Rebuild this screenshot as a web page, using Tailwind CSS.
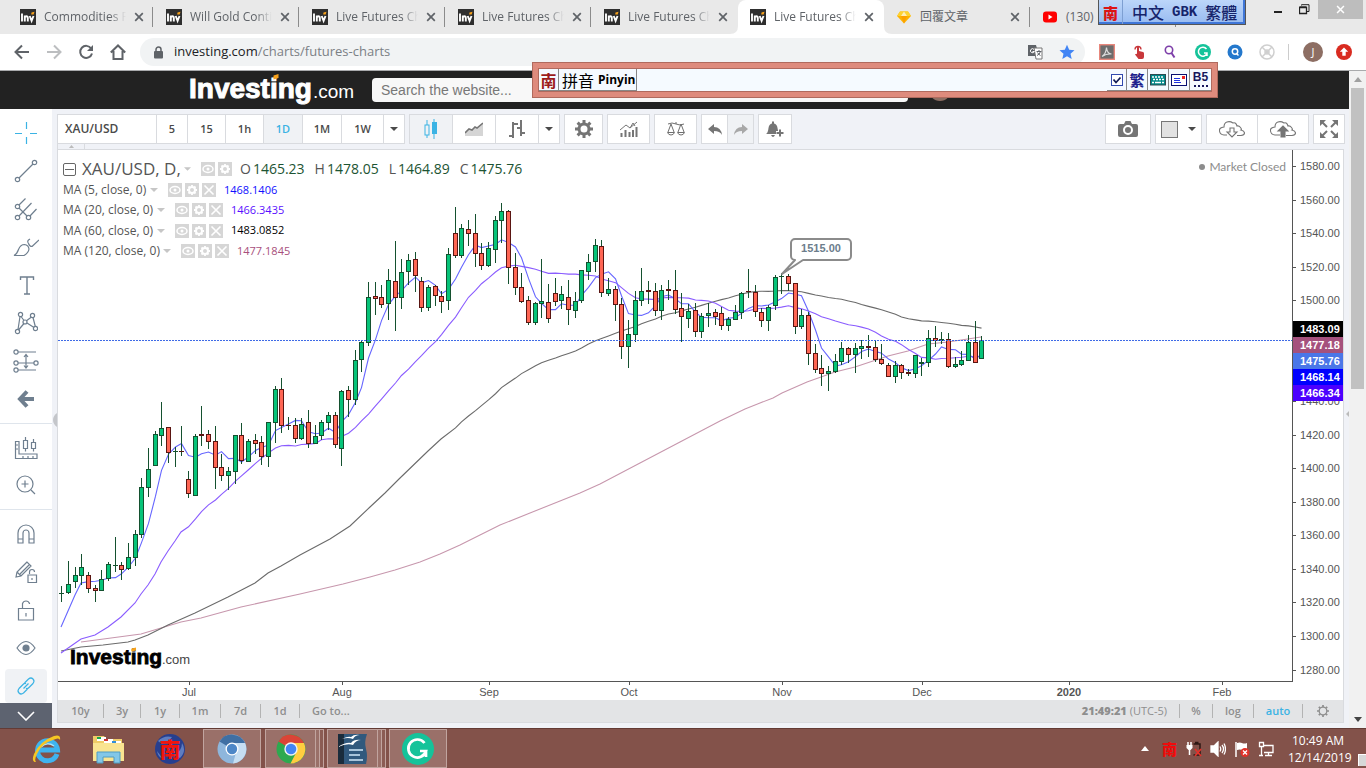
<!DOCTYPE html>
<html lang="en">
<head>
<meta charset="utf-8">
<title>Live Futures Charts - Investing.com</title>
<script src="https://cdn.jsdelivr.net/npm/@tailwindcss/browser@4"></script>
</head>
<body class="h-screen w-full overflow-hidden bg-white font-['Open_Sans','Noto_Sans_CJK_TC',sans-serif]">
<svg class="hidden" aria-hidden="true">
  <symbol id="fav" viewBox="0 0 16 16"><rect width="16" height="16" fill="#2f2f2f"/><g stroke="#fff" fill="none" stroke-width="1.9"><path d="M2 4.5V12.500M4.800 12.500V6.500M4.800 9q0-1.700 1.500-1.700t1.500 1.700v3.500M9.700 7l1.900 4.800L13.500 7"/></g><path d="M11.500 3.500l3-.8-.8 2.800h-2.500z" fill="#f7a11b"/></symbol>
  <symbol id="x" viewBox="0 0 10 10"><path d="M1.200 1.200l7.600 7.600M8.800 1.200L1.200 8.800" stroke="currentColor" stroke-width="1.700" fill="none"/></symbol>
  <symbol id="eye" viewBox="0 0 14 14"><rect width="14" height="14" fill="#d6d6d6"/><ellipse cx="7" cy="7" rx="5" ry="3.500" fill="none" stroke="#fff" stroke-width="1.500"/><circle cx="7" cy="7" r="1.500" fill="#fff"/></symbol>
  <symbol id="cog" viewBox="0 0 14 14"><rect width="14" height="14" fill="#d6d6d6"/><circle cx="7" cy="7" r="3" fill="none" stroke="#fff" stroke-width="2"/><path d="M7 2v1.500M7 10.500V12M2 7h1.500M10.500 7H12M3.500 3.500l1 1M9.500 9.500l1 1M10.500 3.500l-1 1M3.500 10.500l1-1" stroke="#fff" stroke-width="1.800"/></symbol>
  <symbol id="del" viewBox="0 0 14 14"><rect width="14" height="14" fill="#d6d6d6"/><path d="M2.500 2.500l9 9M11.500 2.500l-9 9" stroke="#fff" stroke-width="1.600"/></symbol>
  <symbol id="caret" viewBox="0 0 8 4"><path d="M0 0h8L4 4z" fill="currentColor"/></symbol>
</svg>

<div class="relative flex h-full w-full flex-col">

<!-- Tab strip -->
<div class="flex h-[34px] shrink-0 bg-[#e9e9e9] pl-2 text-xs text-[#5f6368]">
  <div class="flex w-[146px] shrink-0 items-center border-r border-transparent pl-3"><svg class="size-4"><use href="#fav"/></svg><span class="ml-2 w-[82px] overflow-hidden whitespace-nowrap [mask-image:linear-gradient(90deg,#000_80%,transparent)]">Commodities Futures</span><button aria-label="Close tab" class="ml-2"><svg class="size-[10px]"><use href="#x"/></svg></button><i class="ml-auto h-5 w-px bg-[#8b8b8b]"></i></div>
  <div class="flex w-[146px] shrink-0 items-center border-r border-transparent pl-3"><svg class="size-4"><use href="#fav"/></svg><span class="ml-2 w-[82px] overflow-hidden whitespace-nowrap [mask-image:linear-gradient(90deg,#000_80%,transparent)]">Will Gold Continue</span><button aria-label="Close tab" class="ml-2"><svg class="size-[10px]"><use href="#x"/></svg></button><i class="ml-auto h-5 w-px bg-[#8b8b8b]"></i></div>
  <div class="flex w-[146px] shrink-0 items-center border-r border-transparent pl-3"><svg class="size-4"><use href="#fav"/></svg><span class="ml-2 w-[82px] overflow-hidden whitespace-nowrap [mask-image:linear-gradient(90deg,#000_80%,transparent)]">Live Futures Charts</span><button aria-label="Close tab" class="ml-2"><svg class="size-[10px]"><use href="#x"/></svg></button><i class="ml-auto h-5 w-px bg-[#8b8b8b]"></i></div>
  <div class="flex w-[146px] shrink-0 items-center border-r border-transparent pl-3"><svg class="size-4"><use href="#fav"/></svg><span class="ml-2 w-[82px] overflow-hidden whitespace-nowrap [mask-image:linear-gradient(90deg,#000_80%,transparent)]">Live Futures Charts</span><button aria-label="Close tab" class="ml-2"><svg class="size-[10px]"><use href="#x"/></svg></button><i class="ml-auto h-5 w-px bg-[#8b8b8b]"></i></div>
  <div class="flex w-[146px] shrink-0 items-center border-r border-transparent pl-3"><svg class="size-4"><use href="#fav"/></svg><span class="ml-2 w-[82px] overflow-hidden whitespace-nowrap [mask-image:linear-gradient(90deg,#000_80%,transparent)]">Live Futures Charts</span><button aria-label="Close tab" class="ml-2"><svg class="size-[10px]"><use href="#x"/></svg></button></div>
  <div class="relative flex w-[146px] shrink-0 items-center rounded-t-lg bg-white pl-3"><svg class="absolute bottom-0 -left-2 size-2" viewBox="0 0 8 8"><path d="M8 0v8H0q8 0 8-8z" fill="#fff"/></svg><svg class="absolute -right-2 bottom-0 size-2" viewBox="0 0 8 8"><path d="M0 0v8h8Q0 8 0 0z" fill="#fff"/></svg><svg class="size-4"><use href="#fav"/></svg><span class="ml-2 w-[82px] overflow-hidden whitespace-nowrap [mask-image:linear-gradient(90deg,#000_80%,transparent)]">Live Futures Charts</span><button aria-label="Close tab" class="ml-2"><svg class="size-[10px]"><use href="#x"/></svg></button></div>
  <div class="flex w-[146px] shrink-0 items-center pl-3"><svg class="size-4" viewBox="0 0 16 16"><path d="M4 2.500h8L15 7l-7 7.500L1 7z" fill="#fdb300"/><path d="M4 2.500h8L15 7H1z" fill="#fdd231"/><path d="M5 7l3-4.500L11 7z" fill="#feeeb7"/><path d="M5 7h6l-3 7.500z" fill="#fda000"/></svg><span class="ml-2 w-[82px]">回覆文章</span><button aria-label="Close tab" class="ml-2"><svg class="size-[10px]"><use href="#x"/></svg></button><i class="ml-auto h-5 w-px bg-[#8b8b8b]"></i></div>
  <div class="flex w-[146px] shrink-0 items-center pl-3"><svg class="size-4" viewBox="0 0 16 16"><rect x="1" y="2.500" width="14" height="11" rx="3" fill="#f00"/><path d="M6.500 5.500v5L10.500 8z" fill="#fff"/></svg><span class="ml-2">(130)</span><i class="ml-auto h-5 w-px bg-[#8b8b8b]"></i></div>
  <div class="ml-auto flex items-start text-[#222]">
    <button aria-label="Minimise" class="mr-4"><svg class="mt-[4px] h-4 w-[10px]" viewBox="0 0 10 16"><path d="M1 8h8" stroke="#222" stroke-width="2"/></svg></button>
    <button aria-label="Restore" class="mr-2"><svg class="mt-1 h-3 w-[11px]" viewBox="0 0 11 12" fill="none" stroke="#222"><path d="M.5 3.500h7v6h-7zM.5 3h7" stroke-width="1.300"/><path d="M2.500 1.500V.7h7.500v6.800H8"/></svg></button>
    <button aria-label="Close" class="mr-[3px] flex h-[19px] w-[45px] items-center justify-center bg-[#bdbdbd] text-white"><svg class="size-[9px]"><use href="#x" width="9" height="9"/></svg></button>
  </div>
</div>

<!-- Address bar -->
<div class="flex h-[37px] shrink-0 items-center border-b border-[#a9aaac] bg-white pr-[14px] pl-[14px]">
  <button aria-label="Back" class="mr-4"><svg class="size-4" viewBox="0 0 16 16" fill="none" stroke="#5f6368" stroke-width="2"><path d="M15 8H2M8 1.500L1.500 8 8 14.500"/></svg></button>
  <button aria-label="Forward" class="mr-4"><svg class="size-4" viewBox="0 0 16 16" fill="none" stroke="#bcbec0" stroke-width="2"><path d="M1 8h13M8 1.500L14.500 8 8 14.500"/></svg></button>
  <button aria-label="Reload" class="mr-4"><svg class="size-4" viewBox="0 0 16 16" fill="none" stroke="#5f6368" stroke-width="2"><path d="M13.200 4.500A6 6 0 1 0 14 9.500"/><path d="M15 1v6H9z" fill="#5f6368" stroke="none"/></svg></button>
  <button aria-label="Home" class="mr-[14px]"><svg class="size-4" viewBox="0 0 16 16" fill="none" stroke="#5f6368" stroke-width="2"><path d="M.8 8.500L8 1.500l7.200 7M3.500 7v8h9V7"/></svg></button>
  <div class="flex h-7 min-w-0 flex-1 items-center rounded-full bg-[#f1f3f4] pr-[10px] pl-[14px]">
    <svg class="h-[13px] w-[9px]" viewBox="0 0 9 13"><rect y="5" width="9" height="7.500" rx="1" fill="#5f6368"/><path d="M2 5V3.500a2.500 2.500 0 0 1 5 0V5" fill="none" stroke="#5f6368" stroke-width="1.500"/></svg>
    <div class="ml-[11px] text-[13px] text-[#7b8085]"><span class="text-[#202124]">investing.com</span>/charts/futures-charts</div>
    <svg class="mr-4 ml-auto size-4" viewBox="0 0 16 16"><path d="M1 1h8l3 11H1z" fill="#5f6368"/><path d="M7 4h8v11H9z" fill="#fff" stroke="#777"/><path d="M7 5.500a2 2 0 1 0 .3 2H5.500" stroke="#fff" fill="none"/><path d="M9.500 7.500h5M12 6v1.500M13.500 7.500q-1 3-3.500 4M10.500 8.500q1 2 3 3" stroke="#5f6368" fill="none"/></svg>
    <svg class="size-4" viewBox="0 0 16 16"><path d="M8 .8l2.200 5 5.300.5-4 3.500 1.200 5.300L8 12.300l-4.700 2.800 1.200-5.300-4-3.500 5.300-.5z" fill="#4285f4"/></svg>
  </div>
  <svg class="ml-[14px] size-4" viewBox="0 0 16 16"><rect x=".7" y=".7" width="14.600" height="14.600" fill="#6d6d6d" stroke="#e8877c" stroke-width="1.400"/><path d="M3 12.500q4-2.500 4.500-9 .5 6 5 6.500-5-.5-9.500 2.500" fill="none" stroke="#ddd" stroke-width="1.200"/></svg>
  <svg class="ml-[16px] size-4" viewBox="0 0 16 16"><path d="M6 9V3.500q0-1 1-1t1 1V7l4 1q1 .3 1 1.500V13q0 2-2 2H7.500L4 10.500q1-1 2-.5z" fill="#c8373b"/><path d="M4 5.500a3 3 0 1 1 6 0" fill="none" stroke="#c8373b" stroke-width="1.300"/></svg>
  <svg class="ml-[15px] size-4" viewBox="0 0 16 16" fill="none" stroke="#7d3fa9"><circle cx="7" cy="6" r="3.700" stroke-width="1.600"/><path d="M9.500 9l3 4.500" stroke-width="2"/></svg>
  <svg class="ml-[17px] size-4" viewBox="0 0 16 16"><circle cx="8" cy="8" r="8" fill="#15c39a"/><path d="M11.500 5A4.500 4.500 0 1 0 12 9.500M9 9h3v3" fill="none" stroke="#fff" stroke-width="1.500"/></svg>
  <svg class="ml-[16px] size-4" viewBox="0 0 16 16"><circle cx="8" cy="8" r="7.500" fill="#2478cc"/><circle cx="8" cy="7.500" r="2.700" fill="none" stroke="#fff" stroke-width="1.500"/><path d="M9.500 9.500l2 2" stroke="#fff" stroke-width="1.500"/></svg>
  <svg class="ml-[16px] size-4" viewBox="0 0 16 16" fill="none" stroke="#cfcfcf" stroke-width="1.500"><circle cx="8" cy="8" r="7"/><circle cx="8" cy="8" r="2"/><path d="M3 3l10 10M13 3L3 13"/></svg>
  <i class="ml-[13px] h-4 w-px bg-[#ccc]"></i>
  <span class="ml-[14px] flex size-5 items-center justify-center rounded-full bg-[#8d6e63] text-[11px] text-white">J</span>
  <svg class="ml-[13px] size-4 shrink-0" viewBox="0 0 16 16"><circle cx="8" cy="8" r="8" fill="#d92b20"/><path d="M8 3.500l4.200 4.200H9.700v4H6.300v-4H3.800z" fill="#fff"/></svg>
</div>

<!-- Page -->
<div class="flex min-h-0 flex-1">
  <div class="flex min-w-0 flex-1 flex-col">
    <header class="flex h-[38px] shrink-0 items-center bg-[#222] pl-[190px]">
      <a href="#" aria-label="Investing.com"><svg class="h-[34px] w-[168px] overflow-visible font-['Liberation_Sans',sans-serif]" viewBox="0 0 168 34"><text x="-1" y="25" font-size="28" font-weight="bold" fill="#fff" stroke="#fff" stroke-width="1">Investing</text><text x="123" y="25" font-size="19" fill="#fff">.com</text><path d="M83.500 2.500l5-1.500v4l-5 1.500z" fill="#f7a11b"/></svg></a>
      <input aria-label="Search" placeholder="Search the website..." class="ml-[14px] h-6 w-[536px] rounded-sm bg-[#f8f8f8] px-[9px] font-['Liberation_Sans',sans-serif] text-sm placeholder:text-[#777]">
      <span class="ml-[21px] size-[22px] rounded-full bg-[#8d6e63]"></span>
    </header>

    <div class="flex min-h-0 flex-1">
      <!-- Drawing tools -->
      <nav aria-label="Drawing tools" class="flex w-[52px] shrink-0 flex-col bg-white pt-[5px] text-[#6f7f8f]">
        <button aria-label="Crosshair" class="flex h-[38px] items-center justify-center"><svg class="size-6" viewBox="0 0 24 24" stroke="#3bb3e4" stroke-width="1.200"><path d="M12.500 1v7M12.500 16v7M1 12.500h7M16 12.500h7"/></svg></button>
        <button aria-label="Trend line" class="flex h-[38px] items-center justify-center"><svg class="size-6" viewBox="0 0 24 24" fill="none" stroke="currentColor" stroke-width="1.200"><circle cx="3.500" cy="20.500" r="2.200"/><circle cx="20.500" cy="3.500" r="2.200"/><path d="M5 19L19 5"/></svg></button>
        <button aria-label="Pitchfork" class="flex h-[38px] items-center justify-center"><svg class="size-6" viewBox="0 0 24 24" fill="none" stroke="currentColor" stroke-width="1.200"><circle cx="3.500" cy="9.500" r="2.200"/><circle cx="3.500" cy="20.500" r="2.200"/><circle cx="14.500" cy="20.500" r="2.200"/><path d="M5 8l6.500-6.500M5 11l8 8M5 19L17.500 6M16 19l6.500-7"/></svg></button>
        <button aria-label="Brush" class="flex h-[38px] items-center justify-center"><svg class="h-6 w-[26px]" viewBox="0 0 26 24" fill="none" stroke="currentColor" stroke-width="1.200"><path d="M1 20.500q3-1.500 4.500-6Q7.500 9.500 11.500 9.500q4 .5 4.500 4.500-.5 4-5 6.500zM15.500 5q-1.500 1.500 0 3.500M19 11.500q-2.500 0-3.500-3M19 11.500L26 5M15.500 5l1.500-1"/></svg></button>
        <button aria-label="Text" class="flex h-[38px] items-center justify-center"><svg class="size-6" viewBox="0 0 24 24" fill="none" stroke="currentColor" stroke-width="1.400"><path d="M6.500 7V4h13v3M13 4v17M10 21h6"/></svg></button>
        <button aria-label="Patterns" class="flex h-[38px] items-center justify-center"><svg class="size-6" viewBox="0 0 24 24" fill="none" stroke="currentColor" stroke-width="1.200"><circle cx="6.500" cy="3.500" r="2.100"/><circle cx="18.500" cy="4.500" r="2.100"/><circle cx="3.500" cy="20.500" r="2.100"/><circle cx="21.500" cy="17.500" r="2.100"/><circle cx="11" cy="11" r="2"/><path d="M6 5.500l-2 13M7 5.500l3 4M17.500 6l-5 3.700M19 6.500l2.300 9M13 12l7 4.500M10 12.500l-5.500 6.500"/></svg></button>
        <button aria-label="Prediction" class="flex h-[38px] items-center justify-center"><svg class="h-6 w-[26px]" viewBox="0 0 26 24" fill="none" stroke="currentColor" stroke-width="1.200"><circle cx="3" cy="3" r="2.100"/><circle cx="3" cy="14" r="2.100"/><circle cx="3" cy="21" r="2.100"/><circle cx="23" cy="14" r="2.100"/><path d="M5 3h18M5 14h16M5 21h18M13 6v12M11 8l2-2.500L15 8M11 16.500l2 2.500 2-2.500"/></svg></button>
        <button aria-label="Back arrow" class="flex h-[38px] items-center justify-center"><svg class="size-5" viewBox="0 0 20 20" fill="none" stroke="currentColor" stroke-width="4"><path d="M18 10H5M11 2.500L4 10l7 7.500"/></svg></button>
        <hr class="mt-[5px] mb-[6px] border-[#dfe5ec]">
        <button aria-label="Measure" class="flex h-[36px] items-center justify-center"><svg class="size-6" viewBox="0 0 24 24" fill="none" stroke="currentColor" stroke-width="1.200"><path d="M1.500 5.500h3.500v12.500h18v4.500H1.500zM2 9h2M2 13h2M9 20v2M14 20v2M19 20v2M9.500 4.500h4v8h-4zM11.500 1v3.500M11.500 12.500v3M17.500 6.500h4v6h-4zM19.500 3v3.500M19.500 12.500v3"/></svg></button>
        <button aria-label="Zoom in" class="flex h-[37px] items-center justify-center"><svg class="size-5" viewBox="0 0 20 20" fill="none" stroke="currentColor" stroke-width="1.200"><circle cx="9" cy="9" r="8"/><path d="M15 15l4 4M9 5.500v7M5.500 9h7"/></svg></button>
        <hr class="mt-[6px] mb-[5px] border-[#dfe5ec]">
        <button aria-label="Magnet" class="flex h-[38px] items-center justify-center"><svg class="size-5" viewBox="0 0 20 20" fill="none" stroke="currentColor" stroke-width="1.200"><path d="M2 19V9a8 8 0 0 1 16 0v10h-5V9a3 3 0 0 0-6 0v10zM2 15h5M13 15h5"/></svg></button>
        <button aria-label="Stay in drawing mode" class="flex h-[38px] items-center justify-center"><svg class="size-6" viewBox="0 0 24 24" fill="none" stroke="currentColor" stroke-width="1.200"><path d="M2 17l1-5L13 2l4 4L7 16zM3 12l4 4M5 10l8-8M6 14l9-9M15.500 14v-2a2.500 2.500 0 0 1 5 0M14 15h8.500v7.500H14zM18 18v2"/></svg></button>
        <button aria-label="Lock drawings" class="flex h-[38px] items-center justify-center"><svg class="h-[22px] w-[18px]" viewBox="0 0 18 22" fill="none" stroke="currentColor" stroke-width="1.200"><path d="M1.500 9.500h15v11.500h-15zM5.500 9.500V4.500a3.700 3.700 0 0 1 7 0V5M9 14v3.500" /></svg></button>
        <button aria-label="Hide drawings" class="flex h-[38px] items-center justify-center"><svg class="h-4 w-5" viewBox="0 0 20 16" fill="none" stroke="currentColor" stroke-width="1.200"><path d="M1 8q9-13 18 0-9 13-18 0z"/><circle cx="10" cy="8" r="3" fill="currentColor"/></svg></button>
        <button aria-label="Link" class="mx-[5px] mt-[2px] flex h-[34px] shrink-0 items-center justify-center rounded bg-[#f0f2f5]"><svg class="size-5" viewBox="0 0 20 20" fill="none" stroke="#3bb3e4" stroke-width="1.200"><path d="M8.500 7l4-4q2.500-2 4.500 0t0 4.500l-4 4q-1.500 1.500-3 .8M11.500 13l-4 4q-2.500 2-4.500 0t0-4.500l4-4q1.500-1.500 3-.8M7.500 12.500l5-5"/></svg></button>
        <button aria-label="More tools" class="flex min-h-0 flex-1 items-center justify-center bg-[#5d6370]"><svg class="h-[10px] w-[18px]" viewBox="0 0 18 10" fill="none" stroke="#fff" stroke-width="1.600"><path d="M1 1l8 8 8-8"/></svg></button>
      </nav>

      <div class="relative flex min-w-0 flex-1 flex-col bg-[#f0f2f7] pr-1 pl-[5px]">
        <!-- Chart toolbar -->
        <div class="mt-[5px] flex h-[30px] shrink-0 gap-1 text-[11px] font-semibold text-[#4a4a4a] [&_button]:flex [&_button]:items-center [&_button]:justify-center [&_button]:border-[#d9dbdf]">
          <div class="flex border border-[#d9dbdf] bg-white">
            <button class="w-[99px] justify-start! border-r pl-[7px] text-xs">XAU/USD</button>
            <button class="w-[31px] border-r">5</button><button class="w-[38px] border-r">15</button><button class="w-[38px] border-r">1h</button><button class="w-[39px] border-r bg-[#f0f2f5] text-[#3bb3e4]">1D</button><button class="w-[39px] border-r">1M</button><button class="w-[42px] border-r">1W</button><button aria-label="More intervals" class="w-[20px]"><svg class="h-1 w-2"><use href="#caret"/></svg></button>
          </div>
          <div class="flex border border-[#d9dbdf] bg-white">
            <button aria-label="Candles" class="w-[43px] border-r bg-[#f0f2f5]"><svg class="h-5 w-[14px]" viewBox="0 0 14 20"><path d="M3 1v18M10 0v20" stroke="#3bb3e4"/><rect x="1" y="6" width="4" height="10" fill="#f0f2f5" stroke="#3bb3e4"/><rect x="8" y="3" width="5" height="12" fill="#3bb3e4"/></svg></button>
            <button aria-label="Area" class="w-[43px] border-r"><svg class="h-[14px] w-[18px]" viewBox="0 0 18 14"><path d="M0 11l4-4 3 1 3-3 2 1 6-5v13H0z" fill="#d5d5d5"/><path d="M0 11l4-4 3 1 3-3 2 1 6-5" fill="none" stroke="#757575" stroke-width="1.600"/></svg></button>
            <button aria-label="Bars" class="w-[43px] border-r"><svg class="h-5 w-[18px]" viewBox="0 0 18 20" fill="none" stroke="#757575" stroke-width="2"><path d="M5 3v16M1 17h4M5 5h5M13 1v16M13 14h4M9 9h4"/></svg></button>
            <button aria-label="More styles" class="w-[20px]"><svg class="h-1 w-2"><use href="#caret"/></svg></button>
          </div>
          <button aria-label="Settings" class="w-[39px] border bg-white"><svg class="size-[18px]" viewBox="0 0 18 18" fill="none" stroke="#757575"><circle cx="9" cy="9" r="5" stroke-width="3"/><path d="M9 0v4M9 14v4M0 9h4M14 9h4M2.600 2.600l3 3M12.400 12.400l3 3M15.400 2.600l-3 3M2.600 15.400l3-3" stroke-width="3"/></svg></button>
          <button aria-label="Indicators" class="w-[43px] border bg-white"><svg class="h-4 w-[18px]" viewBox="0 0 18 16" fill="none" stroke="#757575"><path d="M1.500 12v4M5.500 9v7M9.500 11v5M13 9v7M16.500 6v10" stroke-width="2"/><path d="M0 9l6-5 4 3 7-6M10 7l3-5 2 3"/></svg></button>
          <button aria-label="Compare" class="w-[43px] border bg-white"><svg class="size-[18px]" viewBox="0 0 18 18" fill="none" stroke="#6f6f6f"><path d="M1 4q4-2 8 0t8 0M9 2v2M4 4L1 12M4 4l3 8M14 4l-3 8M14 4l3 8M.5 12.500h7q-1 2.500-3.500 2.500T.5 12.500zM10.500 12.500h7q-1 2.500-3.500 2.500t-3.500-2.500z"/></svg></button>
          <div class="flex border border-[#d9dbdf] bg-white">
            <button aria-label="Undo" class="w-[26px] border-r"><svg class="h-[11px] w-[14px]" viewBox="0 0 14 11"><path d="M0 5l6-5v3q7 0 8 8-2-4-8-4v3z" fill="#757575"/></svg></button>
            <button aria-label="Redo" class="w-[25px] bg-[#f0f2f5]"><svg class="h-[11px] w-[14px]" viewBox="0 0 14 11"><path d="M14 5L8 0v3Q1 3 0 11q2-4 8-4v3z" fill="#a8a8a8"/></svg></button>
          </div>
          <button aria-label="Add alert" class="w-[34px] border bg-white"><svg class="h-4 w-[18px]" viewBox="0 0 18 16"><path d="M0 13q2-1 2.500-6Q3 3 6 2.500V.5h2v2q3 .5 3.500 4.500.3 3 1.500 4.500V13zM5 14h4q-1 2-2 2t-2-2z" fill="#757575"/><path d="M14 8v8M10 12h8" stroke="#fff" stroke-width="4"/><path d="M14 8.500v7M10.500 12h7" stroke="#757575" stroke-width="2"/></svg></button>
          <button aria-label="Snapshot" class="ml-auto w-[46px] border bg-white"><svg class="h-4 w-5" viewBox="0 0 20 16"><path d="M2 3h4l1.500-3h5L14 3h4q2 0 2 2v9q0 2-2 2H2q-2 0-2-2V5q0-2 2-2z" fill="#757575"/><circle cx="10" cy="9" r="4" fill="none" stroke="#fff" stroke-width="2"/></svg></button>
          <button aria-label="Layout" class="w-[47px] gap-[10px] border bg-white"><i class="size-[17px] border border-[#777] bg-[#e2e2e2]"></i><svg class="h-1 w-2"><use href="#caret"/></svg></button>
          <div class="flex border border-[#d9dbdf] bg-white">
            <button aria-label="Load chart" class="w-[51px] border-r"><svg class="h-[18px] w-[26px]" viewBox="0 0 26 18" fill="none" stroke="#757575" stroke-width="1.100"><path d="M8 15H5q-4-.5-4.500-4T5 7q0-4 3-5t6 1q3-1 4 3 2-.5 3.500 1.500T22 10q3.500 1 3.500 3T22 15.500h-4M11 8v4H8l5 5 5-5h-3V8z"/></svg></button>
            <button aria-label="Save chart" class="w-[50px]"><svg class="h-[18px] w-[26px]" viewBox="0 0 26 18" fill="none" stroke="#757575" stroke-width="1.100"><path d="M10 15H5q-4-.5-4.500-4T5 7q0-4 3-5t6 1q3-1 4 3 2-.5 3.500 1.500T22 10q3.500 1 3.500 3T22 15.500h-6"/><path d="M11 17v-6H8l5-5 5 5h-3v6z" fill="#757575"/></svg></button>
          </div>
          <button aria-label="Full screen" class="w-[32px] border bg-white"><svg class="size-[18px]" viewBox="0 0 18 18" fill="#757575" stroke="#757575" stroke-width="2"><path d="M0 0h6L0 6zM18 0v6l-6-6zM0 18v-6l6 6zM18 18h-6l6-6z" stroke="none"/><path d="M2 2l5 5M16 2l-5 5M2 16l5-5M16 16l-5-5"/></svg></button>
        </div>
        <div class="flex h-[5px] w-7 shrink-0 items-center justify-center border-x border-[#d9dbdf]"><svg class="h-[3px] w-[5px]" viewBox="0 0 5 3"><path d="M0 3h5L2.500 0z" fill="#bbb"/></svg></div>

        <!-- Chart -->
        <main class="mr-px mb-[5px] flex min-h-0 flex-1 flex-col border border-[#d9dbdf] bg-white">
          <div class="flex min-h-0 flex-1">
            <div class="relative min-w-0 flex-1 border-r border-[#555]">
              <svg id="plot" class="absolute inset-0 h-full w-full" role="img" aria-label="Gold price candlestick chart"></svg>
              <div class="relative pt-2 pl-[5px] text-xs text-[#555]">
                <div class="flex h-[22px] items-center">
                  <button aria-label="Collapse" class="flex size-[13px] items-center justify-center rounded-[2px] border border-[#666]"><i class="h-px w-[9px] bg-[#666]"></i></button>
                  <span class="ml-[6px] w-[100px] whitespace-nowrap text-[17px]">XAU/USD, D,</span>
                  <svg class="ml-[2px] h-1 w-[7px] text-[#c6c6c6]"><use href="#caret"/></svg>
                  <button aria-label="Hide" class="ml-[10px]"><svg class="size-[14px]"><use href="#eye"/></svg></button>
                  <button aria-label="Format" class="ml-[3px]"><svg class="size-[14px]"><use href="#cog"/></svg></button>
                  <div class="ml-2 flex gap-[10px] text-sm text-[#1d5433] [&>span]:flex [&>span]:gap-[2px]"><span><span class="text-[#555]">O</span>1465.23</span><span><span class="text-[#555]">H</span>1478.05</span><span><span class="text-[#555]">L</span>1464.89</span><span><span class="text-[#555]">C</span>1475.76</span></div>
                </div>
                <div class="flex h-5 items-center"><span class="w-[84px] whitespace-nowrap">MA (5, close, 0)</span><svg class="ml-[3px] h-1 w-2 text-[#c6c6c6]"><use href="#caret"/></svg><span class="ml-[10px] flex gap-[3px]"><button aria-label="Hide"><svg class="size-[14px]"><use href="#eye"/></svg></button><button aria-label="Format"><svg class="size-[14px]"><use href="#cog"/></svg></button><button aria-label="Remove"><svg class="size-[14px]"><use href="#del"/></svg></button></span><span class="ml-2 text-[11px] text-[#1010ff]">1468.1406</span></div>
                <div class="flex h-5 items-center"><span class="w-[91px] whitespace-nowrap">MA (20, close, 0)</span><svg class="ml-[3px] h-1 w-2 text-[#c6c6c6]"><use href="#caret"/></svg><span class="ml-[10px] flex gap-[3px]"><button aria-label="Hide"><svg class="size-[14px]"><use href="#eye"/></svg></button><button aria-label="Format"><svg class="size-[14px]"><use href="#cog"/></svg></button><button aria-label="Remove"><svg class="size-[14px]"><use href="#del"/></svg></button></span><span class="ml-2 text-[11px] text-[#5a10ff]">1466.3435</span></div>
                <div class="flex h-[21px] items-center"><span class="w-[91px] whitespace-nowrap">MA (60, close, 0)</span><svg class="ml-[3px] h-1 w-2 text-[#c6c6c6]"><use href="#caret"/></svg><span class="ml-[10px] flex gap-[3px]"><button aria-label="Hide"><svg class="size-[14px]"><use href="#eye"/></svg></button><button aria-label="Format"><svg class="size-[14px]"><use href="#cog"/></svg></button><button aria-label="Remove"><svg class="size-[14px]"><use href="#del"/></svg></button></span><span class="ml-2 text-[11px] text-black">1483.0852</span></div>
                <div class="flex h-5 items-center"><span class="w-[97px] whitespace-nowrap">MA (120, close, 0)</span><svg class="ml-[3px] h-1 w-2 text-[#c6c6c6]"><use href="#caret"/></svg><span class="ml-[10px] flex gap-[3px]"><button aria-label="Hide"><svg class="size-[14px]"><use href="#eye"/></svg></button><button aria-label="Format"><svg class="size-[14px]"><use href="#cog"/></svg></button><button aria-label="Remove"><svg class="size-[14px]"><use href="#del"/></svg></button></span><span class="ml-2 text-[11px] text-[#a84f7c]">1477.1845</span></div>
              </div>
              <div class="absolute top-[9px] right-[6px] flex items-center gap-1 font-['Lato',sans-serif] text-xs text-[#8c8c8c]"><i class="size-[6px] rounded-full bg-[#8c8c8c]"></i>Market Closed</div>
            </div>
            <svg id="prices" class="h-full w-[50px] shrink-0 font-['Liberation_Sans',sans-serif] text-[11px]"></svg>
          </div>
          <svg id="dates" class="h-[19px] w-full shrink-0 font-['Liberation_Sans',sans-serif] text-[11px]"></svg>
          <div class="flex h-[22px] shrink-0 items-center bg-[#e3e4e6] text-[11px] font-semibold text-[#8e8e8e] [&>i]:h-[14px] [&>i]:w-px [&>i]:bg-[#b3b3b3]">
            <button class="w-[45px]">10y</button><i></i><button class="w-[36px]">3y</button><i></i><button class="w-[38px]">1y</button><i></i><button class="w-[40px]">1m</button><i></i><button class="w-[39px]">7d</button><i></i><button class="w-[38px]">1d</button><i></i><button class="ml-3">Go to...</button>
            <span class="mr-3 ml-auto"><b>21:49:21</b> <span class="font-normal">(UTC-5)</span></span><i></i><button class="w-8">%</button><i></i><button class="w-10">log</button><i></i><button class="w-12 text-[#3bb3e4]">auto</button><i></i>
            <button aria-label="Chart properties" class="flex w-10 justify-center"><svg class="size-3" viewBox="0 0 12 12" fill="none" stroke="#8e8e8e"><circle cx="6" cy="6" r="3.800" stroke-width="1.300"/><path d="M6 0v2M6 10v2M0 6h2M10 6h2M1.800 1.800l1.400 1.400M8.800 8.800l1.400 1.400M10.200 1.800L8.800 3.200M1.800 10.200l1.400-1.400" stroke-width="1.700"/></svg></button>
          </div>
        </main>
        <svg class="absolute top-[304px] left-[1px] h-[14px] w-1" viewBox="0 0 4 14"><path d="M4 0v14Q0 11 0 7t4-7z" fill="#c4c6ca"/></svg>
        <svg class="absolute top-[298px] right-0 h-[14px] w-1" viewBox="0 0 4 14"><path d="M4 4v6L1 7z" fill="#bbb"/></svg>
      </div>
    </div>
  </div>
  <!-- Page scrollbar -->
  <div class="flex w-[17px] shrink-0 flex-col items-center bg-[#f1f1f1]"><svg class="my-[6px] h-[5px] w-2 shrink-0" viewBox="0 0 8 5"><path d="M0 5h8L4 0z" fill="#a0a0a0"/></svg><div class="h-[301px] w-[13px] bg-[#c1c1c1]"></div><svg class="mt-auto mb-[6px] h-[5px] w-2 shrink-0" viewBox="0 0 8 5"><path d="M0 0h8L4 5z" fill="#444"/></svg></div>
</div>

<!-- Taskbar -->
<footer class="flex h-10 shrink-0 items-center border-t border-[#633b35] bg-[#83524a] pl-[27px] text-white">
  <button aria-label="Internet Explorer" class="flex w-10 justify-center"><svg class="h-8 w-[30px]" viewBox="0 0 30 32"><path d="M25 21A10 10 0 1 1 25.500 17H8" fill="none" stroke="#3fb4f0" stroke-width="5"/><path d="M9 14q6-6 13-1" fill="none" stroke="#a7e5fd" stroke-width="1.500"/><path d="M4 29Q-1 29 2 21 8 8 22 3q7-2 6 4-1-3-7 0Q10 10 5 21q-3 6-1 8z" fill="#f6c623"/></svg></button>
  <button aria-label="File Explorer" class="ml-[21px] flex w-10 justify-center"><svg class="h-[30px] w-8" viewBox="0 0 32 30"><path d="M1 2h11l2 3h16v21H1z" fill="#eecb67"/><path d="M5 3h9v4H5z" fill="#fff"/><path d="M5 3h4v2H5z" fill="#18a84a"/><path d="M12 5h9v4h-9z" fill="#fff"/><path d="M12 5h4v2h-4z" fill="#d2342f"/><path d="M20 7h9v3h-9z" fill="#fff"/><path d="M20 7h4v2h-4z" fill="#318fd8"/><path d="M1 9h31v18H1z" fill="#f9e491"/><path d="M5 29V18h23v11h-6v-6H11v6z" fill="#83c7e8" stroke="#4f9cc4"/></svg></button>
  <button aria-label="NJStar" class="ml-[22px] flex w-10 justify-center"><svg class="size-8" viewBox="0 0 32 32"><circle cx="16" cy="16" r="15" fill="#273f8f"/><path d="M4 8q6-6 14-4-4 6-10 7zM20 22q8-4 8-12 5 8-2 15zM3 18l6 8q-5-2-6-8z" fill="#5f7dc0"/><text x="16" y="23.500" text-anchor="middle" font-size="21" font-weight="900" font-family="Noto Sans CJK TC" fill="#f2140b">南</text></svg></button>
  <button aria-label="Chromium" class="ml-[13px] flex h-[39px] w-[58px] items-center justify-center border border-[#c1a49f] bg-[#9a7069]"><svg class="size-[30px]" viewBox="0 0 30 30"><circle cx="15" cy="15" r="14.500" fill="#8eb6dc"/><path d="M15 15L2.500 7.500A14.500 14.500 0 0 1 28 9z" fill="#3f6fa3"/><path d="M15 15l5 0L16 29.500A14.500 14.500 0 0 0 28 9H16z" fill="#c6def2"/><circle cx="15" cy="15" r="6.500" fill="#fff"/><circle cx="15" cy="15" r="5.200" fill="#4d87c7"/></svg></button>
  <button aria-label="Chrome" class="ml-1 flex h-[39px] w-[59px]"><span class="flex h-full w-[51px] items-center justify-center border border-[#c1a49f] bg-[#9a7069]"><svg class="size-[30px]" viewBox="0 0 30 30"><circle cx="15" cy="15" r="14.500" fill="#2da94f"/><path d="M15 15L2.500 7.500A14.500 14.500 0 0 1 28 9z" fill="#db4437"/><path d="M15 15l5.500 3L14.500 29.500A14.500 14.500 0 0 0 28 9H15z" fill="#ffcd40"/><circle cx="15" cy="15" r="6.700" fill="#f2f2f2"/><circle cx="15" cy="15" r="5.300" fill="#4285f4"/></svg></span><i class="h-full w-1 border-y border-r border-[#c1a49f] bg-[#9a7069]"></i><i class="h-full w-1 border-y border-r border-[#c1a49f] bg-[#8b5c54]"></i></button>
  <button aria-label="OpenOffice Writer" class="ml-[3px] flex h-[39px] w-[59px]"><span class="flex h-full w-[51px] items-center justify-center border border-[#c1a49f] bg-[#9a7069]"><svg class="h-8 w-[31px]" viewBox="0 0 31 32"><path d="M1 1h29q-3 8-1 15t0 15H1z" fill="#31597d"/><path d="M1 1h6v30H1z" fill="#1a2c3c"/><path d="M1 14q8-5 13-4 3-4 10-3-5 0-8 5-6-2-15 2zM5 6q6-3 9-2 3-3 9-2-5 0-7 4-5-2-11 0z" fill="#fff"/><path d="M12 17h14M12 22h11M12 27h14" stroke="#a9c4da" stroke-width="2"/></svg></span><i class="h-full w-1 border-y border-r border-[#c1a49f] bg-[#9a7069]"></i><i class="h-full w-1 border-y border-r border-[#c1a49f] bg-[#8b5c54]"></i></button>
  <button aria-label="Grammarly" class="ml-[3px] flex h-[39px] w-[58px] items-center justify-center border border-[#c1a49f] bg-[#9a7069]"><svg class="size-8" viewBox="0 0 32 32"><circle cx="16" cy="16" r="16" fill="#15c39a"/><path d="M22.500 10A9 9 0 1 0 24 18h-6M24 17v7" fill="none" stroke="#fff" stroke-width="2.700"/></svg></button>
  <div class="ml-auto flex items-center">
    <svg class="mr-[13px] h-[5px] w-2" viewBox="0 0 8 5"><path d="M0 5h8L4 0z" fill="#fff"/></svg>
    <span class="mr-[9px] font-['Noto_Sans_CJK_TC',sans-serif] text-[15px] leading-none font-black text-[#ef0b0b]">南</span>
    <svg class="mr-2 size-4" viewBox="0 0 16 16" fill="none"><path d="M7.500 3h6.500v11H7.500M9 1.500h3.500" stroke="#2d1713" stroke-width="1.500"/><path d="M2 1v3M5 1v3M3.500 8v6" stroke="#fff" stroke-width="1.500"/><path d="M.5 4h6v3l-2 2h-2l-2-2z" fill="#fff"/><path d="M9 8l6 7M15 8l-6 7" stroke="#e2322a" stroke-width="1.800"/></svg>
    <svg class="mr-2 size-4" viewBox="0 0 16 16" fill="none" stroke="#fff" stroke-width="1.300"><path d="M1 5h3l4-4v14l-4-4H1z" fill="#fff"/><path d="M10 5.500q1.500 2.500 0 5M12 4q3 4 0 8M14 2.500q3 5.500 0 11"/></svg>
    <svg class="mr-2 size-4" viewBox="0 0 16 16"><path d="M2 1v15" stroke="#fff" stroke-width="1.500"/><path d="M3 2q3-1 5 0t5 0v7q-3 1-5 0t-5 0z" fill="#fff"/><circle cx="11" cy="11.500" r="4.500" fill="#e0322a"/><path d="M9 9.500l4 4M13 9.500l-4 4" stroke="#fff" stroke-width="1.300"/></svg>
    <svg class="mr-[14px] size-4" viewBox="0 0 16 16" fill="none" stroke="#fff" stroke-width="1.300"><path d="M6 4.500h9v7H6M10.500 12v2.500M7 14.500h7M1.500 1.500h4v4h-4zM3.500 5.500v9.500M1 14.500h4"/></svg>
    <div class="w-[60px] text-center text-xs leading-[17px] whitespace-nowrap">10:49 AM<br>12/14/2019</div>
    <i class="mt-auto ml-[10px] h-3 w-2 self-end border-t border-l border-white bg-[#d8d8d8]"></i>
  </div>
</footer>

<!-- Floating input-method windows -->
<div class="absolute top-0 left-[1098px] flex h-[25px] w-[148px] items-center border border-t-0 border-[#555] bg-linear-to-b from-[#bcd6fa] to-[#98bbf0] font-['Noto_Sans_CJK_TC',sans-serif] leading-none text-[#16246b] shadow-[inset_0_-2px_0_#3f76d8,inset_-2px_0_0_#3f76d8]">
  <span class="flex h-full w-6 items-center justify-center border-r border-[#7d9fd2] text-[15px] font-black text-[#dc1414]">南</span><span class="ml-[9px] flex items-center gap-2 text-base leading-none font-medium whitespace-nowrap"><span>中文</span><span class="font-['Liberation_Mono',monospace] text-sm font-bold">GBK</span><span>繁體</span></span>
</div>
<div class="absolute top-[62px] left-[532px] flex h-9 w-[686px] border border-[#b06a5e] bg-[#de8b7d] p-[5px]">
  <div class="flex w-full items-stretch border border-[#b06a5e] bg-[#f5faff] font-['Noto_Sans_CJK_TC',sans-serif] leading-none">
    <span class="flex w-5 items-center justify-center border-r border-b border-[#888] text-base leading-none font-bold text-[#9c1c1c]">南</span>
    <label for="ime" class="flex items-center gap-1 border-r border-b border-[#888] pr-px pl-[3px] text-base leading-none whitespace-nowrap text-black">拼音<b class="font-['Open_Sans',sans-serif] text-xs">Pinyin</b></label>
    <input id="ime" class="min-w-0 flex-1 bg-transparent px-1">
    <button aria-label="Toggle" class="flex w-5 items-center justify-center border-r border-b border-[#888]"><svg class="size-3" viewBox="0 0 12 12"><rect x=".5" y=".5" width="11" height="11" fill="#fff" stroke="#334aae"/><path d="M2.500 5.500l2.500 3 4.500-5" fill="none" stroke="#111a55" stroke-width="1.800"/></svg></button>
    <button class="flex w-[21px] items-center justify-center border-r border-b border-[#888] text-[15px] font-bold text-[#1e1e8c]">繁</button>
    <button aria-label="Keyboard" class="flex w-[21px] items-center justify-center border-r border-b border-[#888]"><svg class="h-3 w-4" viewBox="0 0 16 12"><rect x=".5" y=".5" width="15" height="10.500" fill="#088" stroke="#2c4a50"/><path d="M2 3h12M3 5.500h11" stroke="#fff" stroke-width="1.500" stroke-dasharray="2 1"/><path d="M2 8.500h2M5 8.500h6M12 8.500h2" stroke="#fff" stroke-width="1.500"/></svg></button>
    <button aria-label="Mail" class="flex w-[21px] items-center justify-center border-r border-b border-[#888]"><svg class="h-3 w-4" viewBox="0 0 16 12"><rect x=".5" y=".5" width="15" height="11" fill="#fff" stroke="#0a1070"/><path d="M3 4.500h6M3 6.500h6M3 8.500h7" stroke="#1d33e0"/><rect x="11" y="2" width="3" height="3" fill="#e22"/></svg></button>
    <button class="flex w-[21px] flex-col items-center justify-center gap-[2px] border-b border-[#888] font-['Liberation_Sans',sans-serif] text-xs leading-[11px] font-bold text-[#16165c]">B5<i class="w-[14px] border-b-2 border-dotted border-[#16165c]"></i></button>
  </div>
</div>
</div>

<script>
// Each candle: high, body top, body bottom, low (chart rows), u = up / d = down
const candles = `586 593 594 602 u|561 584 593 594 u|567 575 582 588 u|554 567 576 585 u|572 575 589 593 d|585 588 591 602 d|570 579 591 591 u|562 564 579 581 u|537 565 566 572 u|562 565 570 580 d|543 557 569 570 u|530 534 558 566 u|478 487 535 538 u|448 469 488 497 u|431 434 466 466 u|402 428 436 446 u|427 427 453 463 d|447 451 452 467 u|426 451 452 456 d|471 479 494 498 d|434 436 496 496 u|406 434 436 446 d|430 434 442 449 d|426 441 468 489 d|454 467 476 481 d|467 471 476 490 u|435 435 472 484 u|423 435 461 464 d|439 441 462 462 u|434 440 444 454 d|436 442 457 465 d|422 422 457 467 u|386 389 423 443 u|378 389 426 433 d|417 425 426 430 d|418 425 439 443 d|418 424 439 440 u|410 422 444 448 d|425 436 444 444 u|420 422 436 440 u|412 415 423 430 u|412 415 445 448 d|390 391 449 466 u|386 390 400 417 d|350 360 400 405 u|340 342 360 372 u|282 297 343 346 u|282 296 299 315 d|285 297 305 308 d|269 280 304 320 u|241 281 298 331 d|259 272 298 309 u|254 260 272 285 u|252 259 276 292 d|277 281 308 312 d|285 287 308 311 u|285 286 296 306 d|291 296 302 313 d|248 254 301 310 u|207 233 256 258 d|224 228 256 258 u|220 229 234 246 d|214 233 254 267 d|243 253 266 270 d|242 248 266 267 u|216 220 250 263 u|203 211 221 243 u|210 211 268 284 d|253 267 288 295 d|273 287 302 303 d|296 300 323 325 d|302 303 323 325 u|259 301 304 318 u|284 302 319 323 d|278 293 302 306 d|286 294 301 309 u|280 297 310 325 d|292 301 311 318 u|270 270 301 303 u|254 262 272 280 u|239 245 262 272 u|240 246 293 297 d|278 289 294 296 u|286 289 305 321 d|298 304 347 359 d|320 334 347 368 u|291 300 335 342 u|268 291 301 306 u|281 290 292 304 d|283 291 311 316 d|285 290 311 320 u|280 289 291 300 d|270 290 310 314 d|293 308 317 342 d|304 311 319 328 u|303 310 332 337 d|313 316 332 338 u|303 313 316 327 u|309 312 317 325 d|307 313 326 330 d|317 319 326 331 u|305 312 320 320 u|292 293 313 319 u|269 291 292 298 d|285 292 312 317 d|308 312 321 327 d|305 307 321 331 u|275 277 306 310 u|273 276 277 294 u|274 276 284 291 d|283 283 327 334 d|309 315 327 329 u|312 315 354 365 d|344 353 370 373 d|355 368 374 386 d|366 371 374 391 u|354 361 372 373 u|342 348 362 365 u|347 348 355 363 d|343 348 355 373 u|340 346 349 359 u|335 346 348 357 d|341 347 360 362 d|344 359 364 365 d|363 365 377 377 d|361 365 377 383 u|364 365 373 379 d|369 372 374 376 d|355 355 374 378 u|358 362 364 376 u|330 338 363 367 u|326 338 341 347 d|332 339 341 344 u|333 339 367 368 d|357 364 367 368 u|351 360 365 366 u|335 342 361 361 u|321 342 363 363 d|336 340 359 359 u`
  .split('|').map(s => { const p = s.split(' '); return { h: +p[0], t: +p[1], b: +p[2], l: +p[3], up: p[4] === 'u' }; });
const X = i => Math.floor(61.68 + i * 20 / 3);
const close = candles.map(c => c.up ? c.t : c.b);
function average(n, head) {
  const pts = head.slice();
  for (let i = n - 1; i < close.length; i++) {
    let s = 0;
    for (let k = 0; k < n; k++) s += close[i - k];
    pts.push([X(i) + .5, s / n]);
  }
  return pts;
}
const line = (pts, c) => `<polyline points="${pts.map(p => p.join(',')).join(' ')}" fill="none" stroke="${c}" stroke-width="1.1"/>`;
const ma120 = [[81,642],[141,634],[181,622],[201,618],[241,607],[300,594],[343,584],[370,577],[395,570],[420,562],[440,554],[460,545],[480,535],[500,525],[530,513],[560,501],[580,493],[600,484],[640,463],[680,442],[720,421],[745,409],[760,403],[773,398],[782,393],[807,382],[835,372],[855,367],[888,356],[908,351],[928,344],[948,342],[961,340],[981,337]];
const head60 = [[61,651],[81,647],[103,645],[128,642],[135,640],[148,635],[168,625],[195,613],[228,597],[255,583],[268,573],[281,566],[300,555],[330,539],[350,526],[370,507],[385,493],[399,479],[428,451],[441,439]];
const head20 = [[61,653],[81,639],[95,635],[108,627],[121,617],[135,603],[141,594],[148,585],[155,574],[161,562],[168,551],[175,541],[181,532]];
let g = '<g transform="translate(-58 -150)">';
g += line(ma120, '#c797ad') + line(average(60, head60), '#6b6b6b') + line(average(20, head20), '#8a5cff') + line(average(5, [[61,627],[68,611],[75,595],[81,583]]), '#6666ff');
candles.forEach((c, i) => {
  const x = X(i), s = c.up ? '#14512f' : '#5a1512', f = c.up ? '#06c479' : '#ff6654';
  g += `<rect x="${x}" y="${c.h}" width="1" height="${Math.max(1, c.l - c.h)}" fill="#14512f"/>`;
  g += c.b - c.t <= 2 ? `<rect x="${x - 2}" y="${c.t}" width="5" height="${c.b - c.t}" fill="${s}"/>`
    : `<rect x="${x - 1.5}" y="${c.t + .5}" width="4" height="${c.b - c.t - 1}" fill="${f}" stroke="${s}"/>`;
});
g += '<path d="M58 340.500H2400" stroke="#3f6be6" stroke-dasharray="2 1"/>';
g += '<path d="M795 239h52a4 4 0 0 1 4 4v13a4 4 0 0 1-4 4h-44l-21 14 13-14a4 4 0 0 1-4-4v-13a4 4 0 0 1 4-4z" fill="#fff" stroke="#8b8b8b" stroke-width="2" stroke-linejoin="round"/><text x="821" y="252" text-anchor="middle" font-family="Liberation Sans" font-size="11" font-weight="bold" fill="#6c7d8c">1515.00</text>';
g += '<g font-family="Liberation Sans"><text x="70" y="664" font-size="21" font-weight="bold" stroke="#000" stroke-width=".8">Investing</text><text x="162" y="664" font-size="13" fill="#444">.com</text><path d="M132 648.500l4-1v3l-4 1z" fill="#f7a11b"/></g></g>';
document.getElementById('plot').innerHTML = g;

// Price scale; the last-value tags cover the 1480 and 1460 labels
let p = '';
for (let v = 1580, i = 0; v >= 1280; v -= 20, i++) {
  const y = Math.round(16 + i * 33.57);
  p += `<path d="M0 ${y + .5}h3" stroke="#555"/>`;
  if (v !== 1480 && v !== 1460) p += `<text x="7" y="${y + 4}" fill="#555">${v}.00</text>`;
}
[['1483.09', '#000'], ['1477.18', '#a5517d'], ['1475.76', '#4a76e8'], ['1468.14', '#00f'], ['1466.34', '#4c00ff']].forEach((t, i) => {
  p += `<rect x="0" y="${171 + i * 16}" width="50" height="16" fill="${t[1]}"/><text x="7" y="${183 + i * 16}" fill="#fff" font-weight="bold">${t[0]}</text>`;
});
document.getElementById('prices').innerHTML = p;

let d = '<path d="M0 .5H1235" stroke="#555"/>';
[['Jul', 189], ['Aug', 342], ['Sep', 489], ['Oct', 629], ['Nov', 782], ['Dec', 922], ['2020', 1069], ['Feb', 1222]].forEach(t => {
  d += `<path d="M${t[1] - 57.5} 0v4" stroke="#555"/><text x="${t[1] - 58}" y="15" text-anchor="middle" fill="#555" font-weight="${t[0] === '2020' ? 'bold' : 'normal'}">${t[0]}</text>`;
});
document.getElementById('dates').innerHTML = d;
</script>
</body>
</html>
